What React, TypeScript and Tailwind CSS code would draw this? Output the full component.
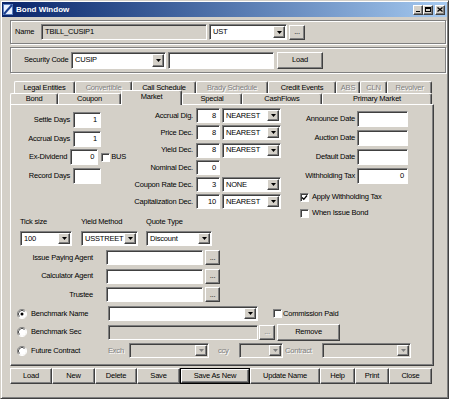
import React from 'react';

const sunken = "border border-t-[#808080] border-l-[#808080] border-b-white border-r-white shadow-[inset_1px_1px_0_#404040]";
const raised = "bg-[#d4d0c8] border border-t-white border-l-white border-b-[#404040] border-r-[#404040] shadow-[inset_-1px_-1px_0_#808080]";
const dim = "text-[#808080] [text-shadow:1px_1px_0_#fff]";

function Field({ className = "", value = "", right = false, disabled = false }: { className?: string; value?: string; right?: boolean; disabled?: boolean }) {
  return (
    <div className={`${sunken} ${disabled ? "bg-[#d4d0c8]" : "bg-white"} flex items-center px-[3px] shrink-0 ${right ? "justify-end" : ""} ${className}`}>
      {value}
    </div>
  );
}

function Arrow({ disabled = false }: { disabled?: boolean }) {
  return (
    <div className={`${raised} w-[12px] h-full flex items-center justify-center shrink-0`}>
      <svg width="5" height="3" viewBox="0 0 5 3">
        <path d="M0 0h5L2.5 3z" fill={disabled ? "#808080" : "#000"} />
      </svg>
    </div>
  );
}

function Combo({ className = "", value = "", disabled = false }: { className?: string; value?: string; disabled?: boolean }) {
  return (
    <div className={`${sunken} ${disabled ? "bg-[#d4d0c8]" : "bg-white"} flex items-stretch p-[1px] shrink-0 ${className}`}>
      <div className="flex-1 flex items-center pl-[2px] overflow-hidden whitespace-nowrap">{value}</div>
      <Arrow disabled={disabled} />
    </div>
  );
}

function Btn({ className = "", label, disabled = false }: { className?: string; label: string; disabled?: boolean }) {
  return (
    <div className={`${raised} flex items-center justify-center shrink-0 whitespace-nowrap ${disabled ? dim : ""} ${className}`}>
      {label}
    </div>
  );
}

function Check({ checked = false }: { checked?: boolean }) {
  return (
    <div className={`${sunken} bg-white w-[9px] h-[9px] shrink-0 flex items-center justify-center`}>
      {checked && (
        <svg width="7" height="7" viewBox="0 0 7 7">
          <path d="M1 3.5l1.8 1.8L6 1.5" stroke="#000" strokeWidth="1.3" fill="none" />
        </svg>
      )}
    </div>
  );
}

function Radio({ checked = false }: { checked?: boolean }) {
  return (
    <svg width="10" height="10" viewBox="0 0 10 10" className="shrink-0">
      <circle cx="5" cy="5" r="4" fill="#fff" />
      <path d="M8.3 1.7A4.5 4.5 0 1 0 1.7 8.3" stroke="#808080" fill="none" />
      <path d="M1.7 8.3A4.5 4.5 0 0 0 8.3 1.7" stroke="#fff" fill="none" />
      <path d="M7.5 2.5A3.5 3.5 0 1 0 2.5 7.5" stroke="#404040" strokeWidth="0.9" fill="none" />
      {checked && <circle cx="5" cy="5" r="1.5" fill="#000" />}
    </svg>
  );
}

function Tab({ label, className = "", disabled = false }: { label: string; className?: string; disabled?: boolean }) {
  return (
    <div className={`h-full border-t border-l border-r border-t-white border-l-white border-r-[#404040] shadow-[inset_-1px_0_0_#808080] rounded-t-[2px] flex items-center justify-center whitespace-nowrap shrink-0 bg-[#d4d0c8] ${disabled ? dim : ""} ${className}`}>
      {label}
    </div>
  );
}

function TitleButton({ children, className = "" }: { children: React.ReactNode; className?: string }) {
  return <div className={`${raised} w-[10px] h-[10px] flex items-center justify-center ${className}`}>{children}</div>;
}

export default function App() {
  return (
    <div className="w-[449px] h-[399px] bg-[#d4d0c8] border border-t-[#d4d0c8] border-l-[#d4d0c8] border-b-[#404040] border-r-[#404040] shadow-[inset_1px_1px_0_#fff,inset_-1px_-1px_0_#808080] p-[1px] overflow-hidden font-['Liberation_Sans',Arial,sans-serif] text-[7.5px] tracking-[-0.2px] leading-none text-black select-none">
      {/* title bar */}
      <div className="h-[15px] bg-gradient-to-r from-[#0a246a] to-[#a6caf0] flex items-center">
        <svg width="10" height="11" viewBox="0 0 10 11" className="ml-[1px]">
          <rect x="0.5" y="0.5" width="9" height="10" fill="#e8f0ff" stroke="#5a7fc0" />
          <path d="M1 10L9 1" stroke="#1b3f8f" strokeWidth="2" />
        </svg>
        <span className="ml-[3px] text-[8px] font-bold tracking-normal text-white">Bond Window</span>
        <div className="ml-auto mr-[2px] flex items-center">
          <TitleButton>
            <div className="w-[4px] h-[1.5px] bg-black mt-[4px] -ml-[1px]" />
          </TitleButton>
          <TitleButton>
            <div className="w-[6px] h-[5px] border border-black border-t-2" />
          </TitleButton>
          <TitleButton className="ml-[2px]">
            <svg width="6" height="5" viewBox="0 0 6 5">
              <path d="M0.5 0.5l5 4M5.5 0.5l-5 4" stroke="#000" strokeWidth="1.3" />
            </svg>
          </TitleButton>
        </div>
      </div>

      <div className="pl-[8px] pr-[1px]">
        {/* name row */}
        <div className="mt-[3px] h-[24px] border border-[#808080] shadow-[inset_1px_1px_0_#fff,1px_1px_0_#fff] flex items-center">
          <span className="ml-[4px] w-[26px]">Name</span>
          <Field className="w-[166px] h-[16px]" value="TBILL_CUSIP1" disabled />
          <Combo className="ml-[2px] w-[78px] h-[16px]" value="UST" />
          <Btn className="ml-[2px] w-[16px] h-[15px]" label="..." />
        </div>

        {/* security code row */}
        <div className="mt-[3px] h-[26px] border border-[#808080] shadow-[inset_1px_1px_0_#fff,1px_1px_0_#fff] flex items-center">
          <span className="ml-[13px] w-[46px]">Security Code</span>
          <Combo className="ml-[1px] w-[95px] h-[17px]" value="CUSIP" />
          <Field className="ml-[2px] w-[106px] h-[17px]" />
          <Btn className="ml-[3px] w-[46px] h-[17px]" label="Load" />
        </div>

        {/* tabs */}
        <div className="mt-[8px] ml-[4px] h-[12px] flex">
          <Tab label="Legal Entities" className="w-[61px]" />
          <Tab label="Convertible" className="w-[57px]" disabled />
          <Tab label="Call Schedule" className="w-[64px]" />
          <Tab label="Brady Schedule" className="w-[72px]" disabled />
          <Tab label="Credit Events" className="w-[68px]" />
          <Tab label="ABS" className="w-[24px]" disabled />
          <Tab label="CLN" className="w-[27px]" disabled />
          <Tab label="Revolver" className="w-[45px]" disabled />
        </div>
        <div className="h-[11px] flex items-end">
          <Tab label="Bond" className="w-[48px] h-[11px]" />
          <Tab label="Coupon" className="w-[63px] h-[11px]" />
          <Tab label="Market" className="w-[61px] !h-[15px] -mb-[1px] relative z-10 items-start pt-[2px]" />
          <Tab label="Special" className="w-[60px] h-[11px]" />
          <Tab label="CashFlows" className="w-[80px] h-[11px]" />
          <Tab label="Primary Market" className="w-[110px] h-[11px]" />
        </div>

        {/* panel */}
        <div className="w-[424px] h-[262px] border border-t-white border-l-white border-b-[#404040] border-r-[#404040] shadow-[inset_-1px_-1px_0_#808080]">
          <div className="flex items-start pt-[3px] h-[112px]">
            {/* left column */}
            <div className="w-[115px] mt-[4px] flex flex-col gap-[2.5px] shrink-0">
              {[
                ["Settle Days", "1"],
                ["Accrual Days", "1"],
                ["Ex-Dividend", "0"],
                ["Record Days", ""],
              ].map(([label, v]) => (
                <div key={label} className="flex items-center h-[16px]">
                  <span className="w-[59px] text-right">{label}</span>
                  <Field className="ml-[3px] w-[28px] h-[16px]" value={v} right />
                  {label === "Ex-Dividend" && (
                    <>
                      <div className="ml-[3px]"><Check /></div>
                      <span className="ml-[1px]">BUS</span>
                    </>
                  )}
                </div>
              ))}
            </div>

            {/* middle column */}
            <div className="w-[155px] flex flex-col gap-[2.3px] shrink-0">
              {[
                ["Accrual Dig.", "8", "NEAREST"],
                ["Price Dec.", "8", "NEAREST"],
                ["Yield Dec.", "8", "NEAREST"],
                ["Nominal Dec.", "0", ""],
                ["Coupon Rate Dec.", "3", "NONE"],
                ["Capitalization Dec.", "10", "NEAREST"],
              ].map(([label, v, c]) => (
                <div key={label} className="flex items-center h-[15px]">
                  <span className="w-[67px] text-right whitespace-nowrap">{label}</span>
                  <Field className="ml-[3px] w-[24px] h-[15px]" value={v} right />
                  {c && <Combo className="ml-[2px] w-[59px] h-[15px]" value={c} />}
                </div>
              ))}
            </div>

            {/* right column */}
            <div className="mt-[3px] flex flex-col shrink-0">
              <div className="flex flex-col gap-[3px]">
                {[
                  ["Announce Date", ""],
                  ["Auction Date", ""],
                  ["Default Date", ""],
                  ["Withholding Tax", "0"],
                ].map(([label, v]) => (
                  <div key={label} className="flex items-center h-[16px]">
                    <span className="w-[74px] text-right whitespace-nowrap">{label}</span>
                    <Field className="ml-[2px] w-[51px] h-[16px]" value={v} right />
                  </div>
                ))}
              </div>
              <div className="mt-[8px] ml-[19px] h-[10px] flex items-center">
                <Check checked />
                <span className="ml-[3px]">Apply Withholding Tax</span>
              </div>
              <div className="mt-[6px] ml-[19px] h-[10px] flex items-center">
                <Check />
                <span className="ml-[3px]">When Issue Bond</span>
              </div>
            </div>
          </div>

          {/* tick size / yield method / quote type */}
          <div className="flex">
            <div className="ml-[9px] flex flex-col">
              <span className="h-[10px] flex items-center">Tick size</span>
              <Combo className="mt-[4px] w-[52px] h-[15px]" value="100" />
            </div>
            <div className="ml-[9px] flex flex-col">
              <span className="h-[10px] flex items-center">Yield Method</span>
              <Combo className="mt-[4px] w-[57px] h-[15px]" value="USSTREET" />
            </div>
            <div className="ml-[8px] flex flex-col">
              <span className="h-[10px] flex items-center">Quote Type</span>
              <Combo className="mt-[4px] w-[66px] h-[15px]" value="Discount" />
            </div>
          </div>

          {/* agents */}
          <div className="mt-[4px] flex flex-col gap-[3.5px]">
            {["Issue Paying Agent", "Calculator Agent", "Trustee"].map((label) => (
              <div key={label} className="flex items-center h-[15px]">
                <span className="w-[82px] text-right">{label}</span>
                <Field className="ml-[13px] w-[97px] h-[15px]" />
                <Btn className="ml-[2px] w-[15px] h-[15px]" label="..." />
              </div>
            ))}
          </div>

          {/* benchmark */}
          <div className="mt-[4px] flex flex-col gap-[3.5px]">
            <div className="flex items-center h-[15px]">
              <div className="ml-[6px] w-[91px] flex items-center shrink-0">
                <Radio checked />
                <span className="ml-[4px]">Benchmark Name</span>
              </div>
              <Combo className="w-[150px] h-[15px]" />
              <div className="ml-[15px]"><Check /></div>
              <span className="ml-[1px]">Commission Paid</span>
            </div>
            <div className="flex items-center h-[15px]">
              <div className="ml-[6px] w-[91px] flex items-center shrink-0">
                <Radio />
                <span className="ml-[4px]">Benchmark Sec</span>
              </div>
              <Field className="w-[150px] h-[15px]" disabled />
              <Btn className="ml-[1px] w-[16px] h-[15px]" label="..." disabled />
              <Btn className="ml-[2px] w-[63px] h-[17px]" label="Remove" />
            </div>
            <div className="flex items-center h-[15px]">
              <div className="ml-[6px] w-[91px] flex items-center shrink-0">
                <Radio />
                <span className="ml-[4px]">Future Contract</span>
              </div>
              <span className={`w-[21px] ${dim}`}>Exch</span>
              <Combo className="w-[80px] h-[15px]" disabled />
              <span className={`ml-[9px] w-[21px] ${dim}`}>ccy</span>
              <Combo className="w-[44px] h-[15px]" disabled />
              <span className={`ml-[2px] w-[37px] ${dim}`}>Contract</span>
              <Combo className="w-[89px] h-[15px]" disabled />
            </div>
          </div>
        </div>

        {/* bottom buttons */}
        <div className="mt-[2px] h-[16px] flex">
          <Btn className="w-[42px] h-full" label="Load" />
          <Btn className="w-[43px] h-full" label="New" />
          <Btn className="w-[42px] h-full" label="Delete" />
          <Btn className="w-[43px] h-full" label="Save" />
          <div className="w-[70px] h-full border border-black shrink-0">
            <Btn className="w-full h-full" label="Save As New" />
          </div>
          <Btn className="w-[70px] h-full" label="Update Name" />
          <Btn className="w-[35px] h-full" label="Help" />
          <Btn className="w-[34px] h-full" label="Print" />
          <Btn className="w-[43px] h-full" label="Close" />
        </div>
      </div>
    </div>
  );
}
